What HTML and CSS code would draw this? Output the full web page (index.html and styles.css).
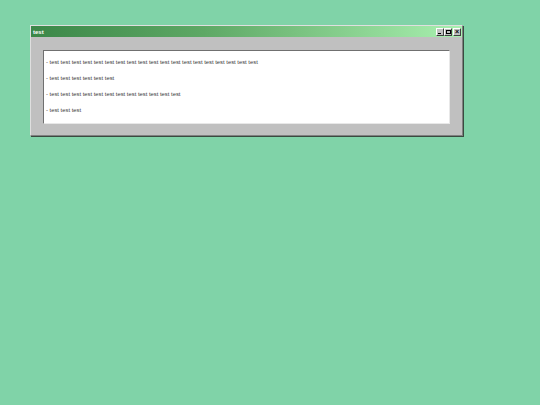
FILE: index.html
```html
<!DOCTYPE html>
<html>
<head>
<meta charset="utf-8">
<link rel="stylesheet" href="styles.css">
</head>
<body>
<div class="window">
  <div class="titlebar">
    <span class="title">test</span>
    <div class="controls">
      <span class="btn btn-min"><i></i></span>
      <span class="btn btn-max"><i></i></span>
      <span class="btn btn-close">×</span>
    </div>
  </div>
  <div class="body">
    <div class="content">
      <p class="line">- test test test test test test test test test test test test test test test test test test test</p>
      <p class="line">- test test test test test test</p>
      <p class="line">- test test test test test test test test test test test test</p>
      <p class="line">- test test test</p>
    </div>
  </div>
</div>
</body>
</html>
```
FILE: styles.css
```css
html, body {
  margin: 0;
  padding: 0;
  background: #80d3a8;
  width: 540px;
  height: 405px;
  overflow: hidden;
  font-family: "Liberation Sans", Arial, sans-serif;
}
.window {
  margin: 25px 0 0 30px;
  width: 431px;
  background: #c0c0c0;
  border-top: 1px solid #dfdfdf;
  border-left: 1px solid #dfdfdf;
  border-right: 1px solid #808080;
  border-bottom: 1px solid #808080;
  box-shadow: 1px 1px 0 #3a4a40;
}
.titlebar {
  height: 11px;
  display: flex;
  align-items: center;
  justify-content: space-between;
  padding: 0 1px 0 2px;
  background: linear-gradient(to right, #3b8748 0%, #5ea865 40%, #a9f0b0 100%);
}
.title {
  color: #ffffff;
  font-weight: bold;
  font-size: 6px;
}
.controls {
  display: flex;
  gap: 0;
}
.btn {
  width: 6px;
  height: 6px;
  background: #c0c0c0;
  border-top: 1px solid #ffffff;
  border-left: 1px solid #ffffff;
  border-right: 1px solid #404040;
  border-bottom: 1px solid #404040;
  display: flex;
  align-items: center;
  justify-content: center;
  position: relative;
  font-size: 7px;
  line-height: 6px;
  color: #000;
}
.btn-min i {
  position: absolute;
  left: 1px;
  bottom: 1px;
  width: 3px;
  height: 1px;
  background: #000;
}
.btn-max i {
  width: 3px;
  height: 2px;
  border: 1px solid #000;
}
.btn-close {
  margin-left: 1px;
  font-weight: bold;
}
.body {
  padding: 13px 12px 11px 12px;
}
.content {
  background: #ffffff;
  border-top: 1px solid #707070;
  border-left: 1px solid #707070;
  border-right: 1px solid #e8e8e8;
  border-bottom: 1px solid #e8e8e8;
  padding: 3px 2px 5px 2px;
}
.line {
  margin: 0;
  height: 16px;
  line-height: 16px;
  font-size: 5.85px;
  color: #3a3a3a;
  white-space: nowrap;
}
```
